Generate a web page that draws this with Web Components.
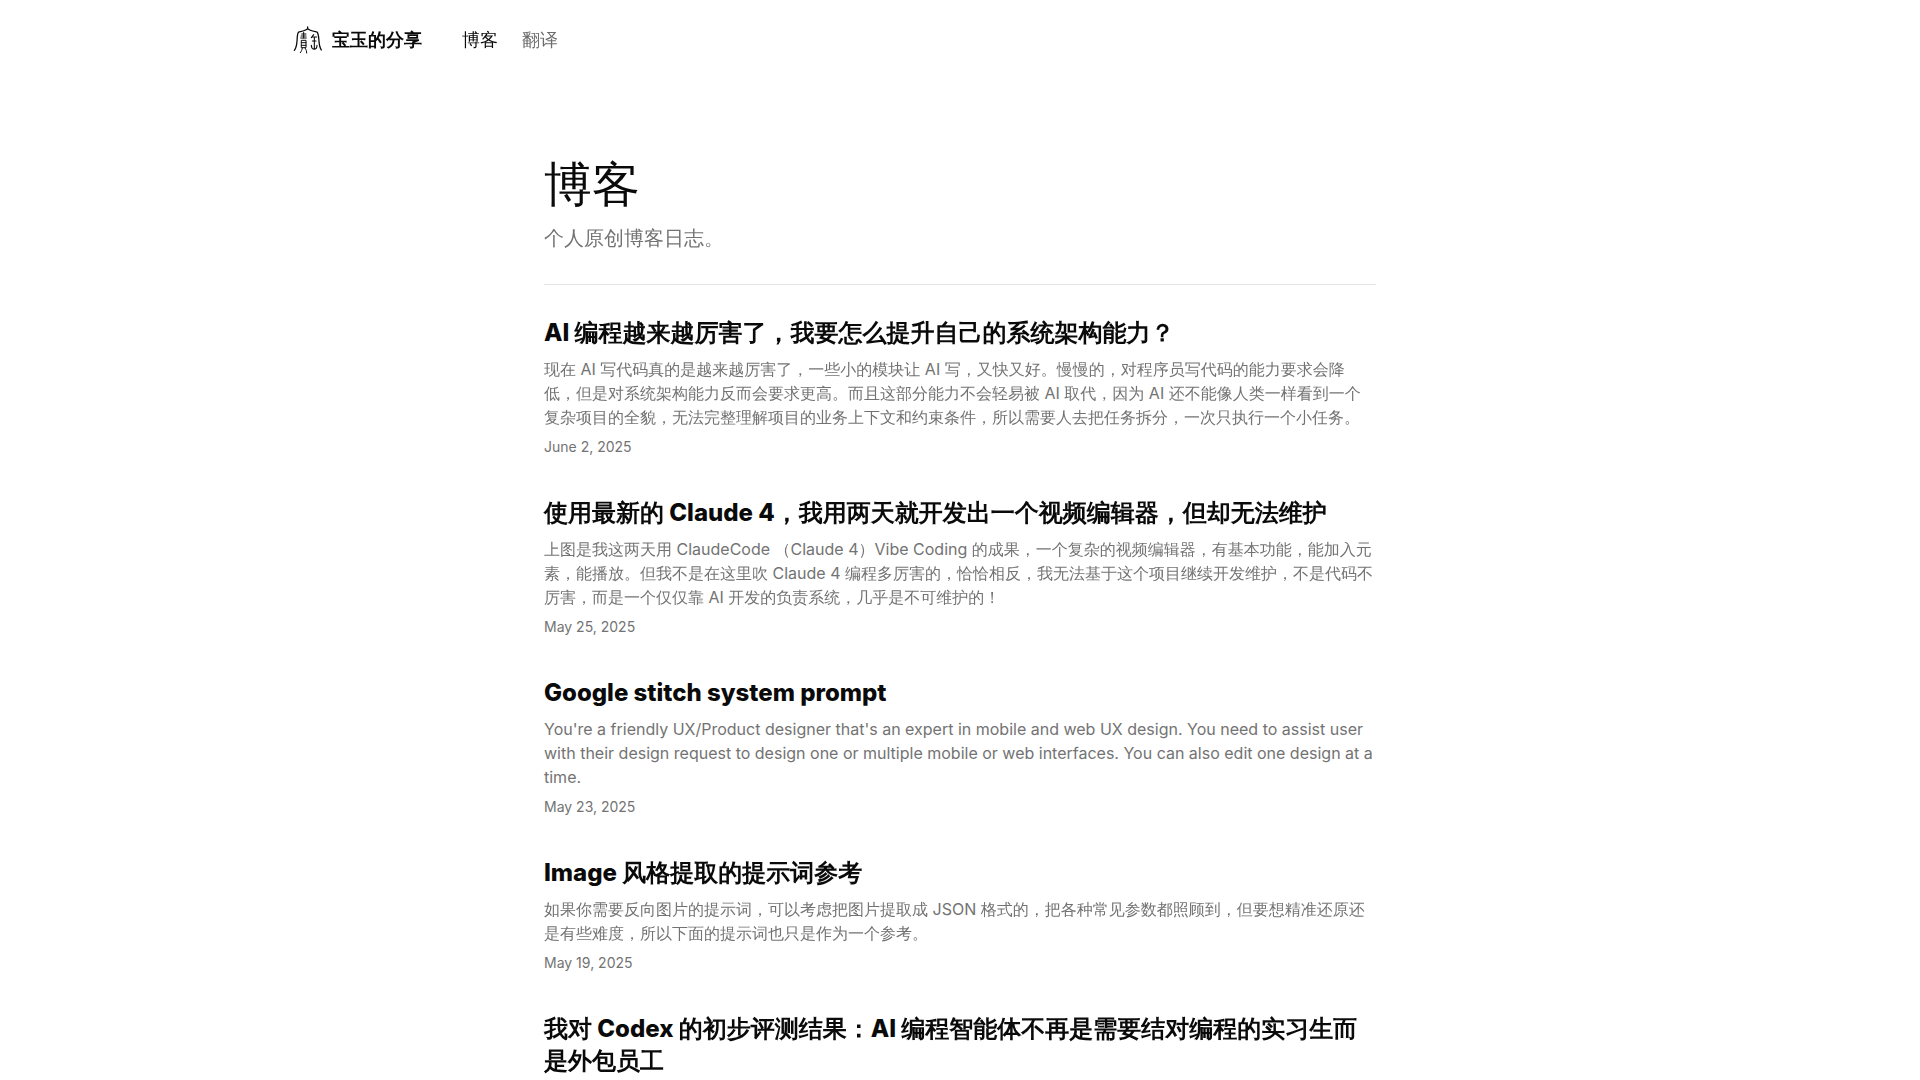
<!DOCTYPE html>
<html lang="zh">
<head>
<meta charset="utf-8">
<meta name="viewport" content="width=device-width, initial-scale=1">
<title>博客 - 宝玉的分享</title>
<style>
  body {
    margin: 0;
    background: #fff;
    color: #0a0a0a;
    font-family: Inter, "WenQuanYi Zen Hei", "Noto Sans CJK SC", sans-serif;
    font-size: 16px;
    line-height: 24px;
    --muted: #737373;
    --border: #e5e5e5;
  }
</style>
</head>
<body>
<site-header>
  <nav-link href="#blog" current>博客</nav-link>
  <nav-link href="#translations">翻译</nav-link>
</site-header>
<blog-page>
  <page-heading slot="heading" heading="博客">个人原创博客日志。</page-heading>
  <post-item heading="AI 编程越来越厉害了，我要怎么提升自己的系统架构能力？" date="June 2, 2025">现在 AI 写代码真的是越来越厉害了，一些小的模块让 AI 写，又快又好。慢慢的，对程序员写代码的能力要求会降低，但是对系统架构能力反而会要求更高。而且这部分能力不会轻易被 AI 取代，因为 AI 还不能像人类一样看到一个复杂项目的全貌，无法完整理解项目的业务上下文和约束条件，所以需要人去把任务拆分，一次只执行一个小任务。</post-item>
  <post-item heading="使用最新的 Claude 4，我用两天就开发出一个视频编辑器，但却无法维护" date="May 25, 2025">上图是我这两天用 ClaudeCode （Claude 4）Vibe Coding 的成果，一个复杂的视频编辑器，有基本功能，能加入元素，能播放。但我不是在这里吹 Claude 4 编程多厉害的，恰恰相反，我无法基于这个项目继续开发维护，不是代码不厉害，而是一个仅仅靠 AI 开发的负责系统，几乎是不可维护的！</post-item>
  <post-item heading="Google stitch system prompt" date="May 23, 2025">You're a friendly UX/Product designer that's an expert in mobile and web UX design. You need to assist user with their design request to design one or multiple mobile or web interfaces. You can also edit one design at a time.</post-item>
  <post-item heading="Image 风格提取的提示词参考" date="May 19, 2025">如果你需要反向图片的提示词，可以考虑把图片提取成 JSON 格式的，把各种常见参数都照顾到，但要想精准还原还是有些难度，所以下面的提示词也只是作为一个参考。</post-item>
  <post-item heading="我对 Codex 的初步评测结果：AI 编程智能体不再是需要结对编程的实习生而是外包员工"></post-item>
</blog-page>

<script>
class SiteLogo extends HTMLElement {
  constructor() {
    super();
    this.attachShadow({ mode: 'open' }).innerHTML = `
      <style>
        :host { display: block; width: 32px; height: 32px; }
        svg { display: block; width: 100%; height: 100%; fill: none; stroke: #0a0a0a; stroke-width: 3.8; stroke-linecap: round; stroke-linejoin: round; }
      </style>
      <svg viewBox="21 27 96 96" aria-hidden="true">
        <path d="M68 36v5M68 41C62 48 50 49 41 51C36 56 37 68 36 79C35 90 33 100 28 106M68 41C74 48 86 49 96 51C101 56 101 68 102 79C103 91 105 99 109 105"/>
        <path stroke-width="3" d="M50 57h13M56 52v17M48 63h15M47 69h17M50 76h13v22h-13zM50 83h13M50 91h13M52 99C51 105 49 109 46 113M60 99C64 104 65 109 65 114"/>
        <path stroke-width="3.2" d="M86 59L79 68M83 66h12M82 78h11M88 67v35M79 91C79 98 82 102 87 103C93 103 96 98 96 91"/>
      </svg>`;
  }
}
customElements.define('site-logo', SiteLogo);

class NavLink extends HTMLElement {
  constructor() {
    super();
    this.attachShadow({ mode: 'open' }).innerHTML = `
      <style>
        :host { display: block; }
        a { display: block; color: #6c6c6c; text-decoration: none; font-size: 18px; line-height: 28px; }
        :host([current]) a { color: #0a0a0a; }
      </style>
      <a><slot></slot></a>`;
  }
  connectedCallback() {
    this.shadowRoot.querySelector('a').href = this.getAttribute('href');
  }
}
customElements.define('nav-link', NavLink);

class SiteHeader extends HTMLElement {
  constructor() {
    super();
    this.attachShadow({ mode: 'open' }).innerHTML = `
      <style>
        :host { display: block; }
        header { display: flex; align-items: center; gap: 40px; height: 80px; max-width: 1400px; margin: 0 auto; padding: 0 32px; box-sizing: border-box; }
        .brand { display: flex; align-items: center; gap: 8px; color: inherit; text-decoration: none; font-size: 18px; line-height: 28px; font-weight: 800; }
        nav { display: flex; gap: 24px; }
      </style>
      <header>
        <a class="brand" href="#"><site-logo></site-logo><span>宝玉的分享</span></a>
        <nav><slot></slot></nav>
      </header>`;
  }
}
customElements.define('site-header', SiteHeader);

class PageHeading extends HTMLElement {
  constructor() {
    super();
    this.attachShadow({ mode: 'open' }).innerHTML = `
      <style>
        :host { display: flex; flex-direction: column; gap: 16px; }
        h1, p { margin: 0; }
        h1 { font-size: 48px; line-height: 48px; font-weight: 400; }
        p { font-size: 20px; line-height: 28px; color: var(--muted); }
      </style>
      <h1></h1>
      <p><slot></slot></p>`;
  }
  connectedCallback() {
    this.shadowRoot.querySelector('h1').textContent = this.getAttribute('heading');
  }
}
customElements.define('page-heading', PageHeading);

class PostItem extends HTMLElement {
  constructor() {
    super();
    this.attachShadow({ mode: 'open' }).innerHTML = `
      <style>
        :host { display: block; }
        article { display: flex; flex-direction: column; gap: 8px; }
        h2, p { margin: 0; }
        h2 { font-size: 24px; line-height: 32px; font-weight: 800; }
        a { color: inherit; text-decoration: none; }
        p { color: var(--muted); }
        time { font-size: 14px; line-height: 20px; color: var(--muted); }
      </style>
      <article>
        <h2><a href="#"></a></h2>
        <p><slot></slot></p>
        <time></time>
      </article>`;
  }
  connectedCallback() {
    this.shadowRoot.querySelector('a').textContent = this.getAttribute('heading');
    this.shadowRoot.querySelector('time').textContent = this.getAttribute('date') || '';
  }
}
customElements.define('post-item', PostItem);

class BlogPage extends HTMLElement {
  constructor() {
    super();
    this.attachShadow({ mode: 'open' }).innerHTML = `
      <style>
        :host { display: block; }
        main { max-width: 896px; margin: 0 auto; padding: 80px 32px 40px; box-sizing: border-box; }
        hr { height: 1px; border: 0; margin: 32px 0; background: var(--border); }
        .posts { display: flex; flex-direction: column; gap: 40px; }
      </style>
      <main>
        <slot name="heading"></slot>
        <hr>
        <div class="posts"><slot></slot></div>
      </main>`;
  }
}
customElements.define('blog-page', BlogPage);
</script>
</body>
</html>
